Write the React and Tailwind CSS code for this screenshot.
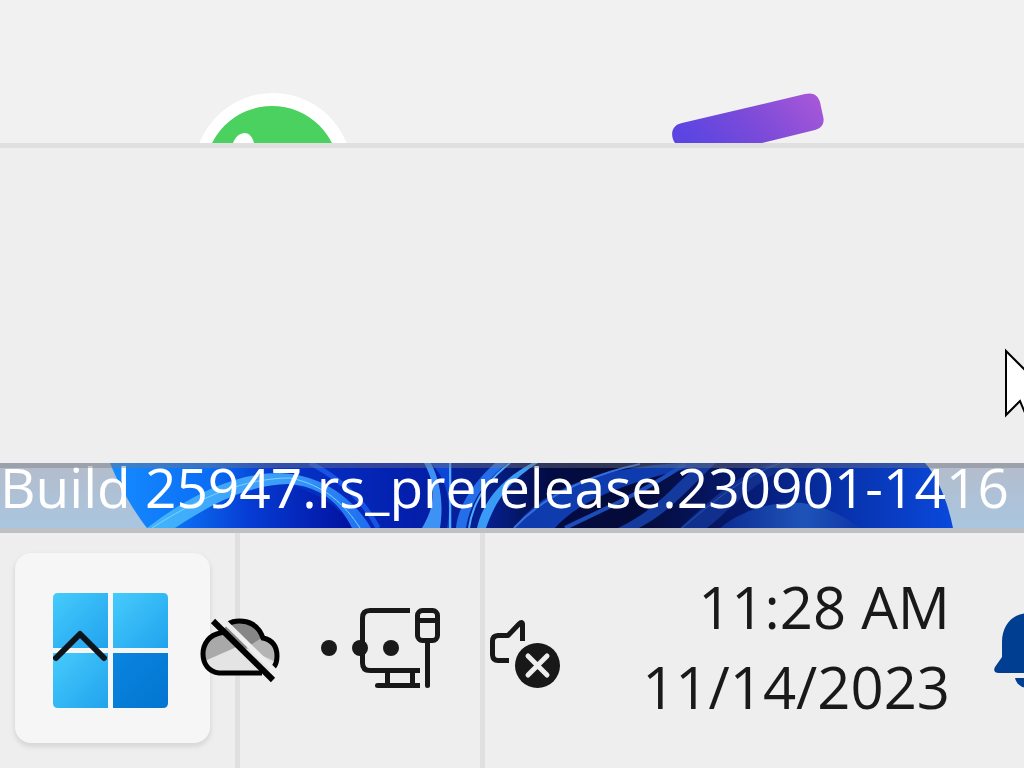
import React from "react";

function WhatsAppIcon() {
  return (
    <svg className="w-40 h-[50px] shrink-0" viewBox="0 0 160 50">
      <circle cx="80" cy="79" r="79" fill="#ffffff" />
      <circle cx="79" cy="80" r="67" fill="#4bd15f" />
      <path d="M40 50C43 43 46 41 51 40C56 40 59 43 61 50Z" fill="#ffffff" />
    </svg>
  );
}

function ClipchampIcon() {
  return (
    <svg className="w-[152px] h-[50px] shrink-0" viewBox="0 0 152 50">
      <defs>
        <linearGradient id="clip" x1="0" y1="0.6" x2="1" y2="0.3">
          <stop offset="0" stopColor="#5b45e2" />
          <stop offset="0.5" stopColor="#7c4bd8" />
          <stop offset="1" stopColor="#a557d8" />
        </linearGradient>
      </defs>
      <path
        d="M3 50C-2 43-1 32 10 30L133 1C141-1 146 2 148 9L151 23C153 30 150 35 143 37L90 50Z"
        fill="url(#clip)"
      />
    </svg>
  );
}

function Cursor() {
  return (
    <svg className="absolute right-0 top-[200px] w-5 h-[72px]" viewBox="0 0 20 72">
      <path
        d="M2 3V67L16 53L24 72L36 66L28 50H49Z"
        fill="#ffffff"
        stroke="#000000"
        strokeWidth="2"
      />
    </svg>
  );
}

function Wallpaper() {
  return (
    <svg
      className="absolute inset-0 w-full h-full"
      viewBox="0 0 1024 65"
      preserveAspectRatio="none"
    >
      <defs>
        <linearGradient id="sky" x1="0" y1="0" x2="0" y2="1">
          <stop offset="0" stopColor="#b4bccb" />
          <stop offset="1" stopColor="#a9c6e0" />
        </linearGradient>
        <linearGradient id="bloom" x1="110" x2="953" y1="0" y2="0" gradientUnits="userSpaceOnUse">
          <stop offset="0" stopColor="#168cff" />
          <stop offset="0.12" stopColor="#0a6df5" />
          <stop offset="0.2" stopColor="#0634c8" />
          <stop offset="0.35" stopColor="#031fae" />
          <stop offset="0.45" stopColor="#06208c" />
          <stop offset="0.52" stopColor="#030b45" />
          <stop offset="0.62" stopColor="#040b38" />
          <stop offset="0.75" stopColor="#06196e" />
          <stop offset="0.86" stopColor="#0730a8" />
          <stop offset="1" stopColor="#0a49dc" />
        </linearGradient>
        <linearGradient id="petal" x1="0" y1="0" x2="1" y2="0">
          <stop offset="0" stopColor="#41b4fb" />
          <stop offset="0.6" stopColor="#3d9dfa" />
          <stop offset="1" stopColor="#1d6cf0" />
        </linearGradient>
        <linearGradient id="inner" x1="0" y1="0" x2="1" y2="0">
          <stop offset="0" stopColor="#0d7af8" />
          <stop offset="0.45" stopColor="#063cd4" />
          <stop offset="1" stopColor="#0212a0" />
        </linearGradient>
        <linearGradient id="hump" x1="0" y1="0" x2="1" y2="0">
          <stop offset="0" stopColor="#0c2c92" />
          <stop offset="0.6" stopColor="#1f53b8" />
          <stop offset="1" stopColor="#0c37a8" />
        </linearGradient>
        <clipPath id="flower">
          <path d="M110 0H925C938 14 948 40 953 65H147C135 50 120 25 110 0Z" />
        </clipPath>
      </defs>
      <rect width="1024" height="65" fill="url(#sky)" />
      <g clipPath="url(#flower)">
        <rect x="100" width="860" height="65" fill="url(#bloom)" />
        <path d="M165 65C205 36 245 20 290 22C320 30 345 48 352 65Z" fill="url(#inner)" />
        <path
          d="M147 65C190 32 235 10 280 10C325 12 355 38 371 65H352C340 40 320 23 288 21C245 22 205 45 175 65Z"
          fill="url(#petal)"
        />
        <path d="M152 65C200 34 245 15 290 15C325 22 345 42 360 65" fill="none" stroke="#79d4ff" />
        <path d="M310 0C345 18 365 40 378 65" fill="none" stroke="#1853e4" strokeWidth="5" />
        <path d="M424 0C438 25 434 45 422 65H440C444 40 440 18 431 0Z" fill="#3e91f5" />
        <path d="M431 0C450 20 451 45 447 65H452V0Z" fill="#0b46d8" />
        <path d="M450 0V65" stroke="#58a8fb" strokeWidth="2" />
        <path d="M495 0C475 18 458 42 456 65H466C470 40 484 18 508 0Z" fill="#256eea" />
        <path d="M532 0C498 18 482 42 477 65H486C494 42 506 20 538 0Z" fill="#3a9bf6" />
        <path d="M510 0C484 20 472 44 469 65" fill="none" stroke="#4ba9fa" strokeWidth="2" />
        <path d="M514 65C540 28 595 5 680 0H715C635 15 580 36 555 65Z" fill="#0e3cae" />
        <path d="M514 65C545 32 590 12 640 1" fill="none" stroke="#3570dc" strokeWidth="2" />
        <path d="M565 65C600 48 640 31 685 1" fill="none" stroke="#1c4cba" strokeWidth="4" />
        <path d="M618 65C655 48 675 21 700 0H716C690 24 670 49 639 65Z" fill="#143a9e" />
        <path d="M680 65C710 38 735 12 773 0H798C755 16 735 43 707 65Z" fill="#112f8d" />
        <path d="M682 65C712 40 740 15 780 0" fill="none" stroke="#2856b8" />
        <path d="M720 65C745 45 775 38 802 40C828 44 845 54 860 65Z" fill="url(#hump)" />
      </g>
    </svg>
  );
}

function WindowsLogo() {
  return (
    <svg className="w-[115px] h-[115px]" viewBox="0 0 115 115">
      <defs>
        <linearGradient id="win" x1="0" y1="0" x2="1" y2="1">
          <stop offset="0" stopColor="#0b85df" />
          <stop offset="1" stopColor="#0275d1" />
        </linearGradient>
        <linearGradient id="pane" x1="0" y1="0" x2="1" y2="1">
          <stop offset="0" stopColor="#46cbfc" />
          <stop offset="1" stopColor="#21a3ed" />
        </linearGradient>
      </defs>
      <path d="M5 0H55V55H0V5Q0 0 5 0Z" fill="url(#pane)" />
      <path d="M60 0H110Q115 0 115 5V55H60Z" fill="url(#pane)" />
      <path d="M0 60H55V115H5Q0 115 0 110Z" fill="url(#pane)" />
      <path d="M60 60H115V110Q115 115 110 115H60Z" fill="url(#win)" />
    </svg>
  );
}

function ChevronIcon() {
  return (
    <svg className="w-[54px] h-8" viewBox="0 0 54 32">
      <path
        d="M3 28L27 4L51 28"
        fill="none"
        stroke="#0d141c"
        strokeWidth="6"
        strokeLinecap="round"
        strokeLinejoin="round"
      />
    </svg>
  );
}

function CloudOffIcon() {
  return (
    <svg className="w-20 h-[66px]" viewBox="0 0 80 66">
      <defs>
        <clipPath id="cloud">
          <path d="M19 55C9 54 3 46 3 36C3 25 10 17 20 16C24 8 32 4 40 4C51 4 60 11 63 21C72 22 77 28 77 38C77 47 71 55 62 55Z" />
        </clipPath>
      </defs>
      <g clipPath="url(#cloud)">
        <rect width="80" height="66" fill="#e4e4e4" />
        <path d="M0 45L48 24L80 44V0H0Z" fill="#a9a9a9" />
        <path d="M24 0H70V20L46 31L24 14Z" fill="#868686" />
        <path d="M60 21L80 22V46L46 30Z" fill="#b4b4b4" />
      </g>
      <path
        d="M62 55H19C9 54 3 46 3 36C3 25 10 17 20 15L24 14M28 6C34 2 45 2 52 6C59 10 61 15 63 20C72 22 77 28 77 38C77 43 76 47 73 50"
        fill="none"
        stroke="#000000"
        strokeWidth="5"
      />
      <path d="M24 3L76 54" stroke="#eeeeee" strokeWidth="5" />
      <path d="M13 3L73 62" stroke="#000000" strokeWidth="6" />
    </svg>
  );
}

function NetworkIcon() {
  return (
    <svg
      className="w-20 h-20"
      viewBox="0 0 80 80"
      fill="none"
      stroke="#181818"
      strokeWidth="5"
    >
      <path d="M50 2.5H10Q2.5 2.5 2.5 10V55Q2.5 62.5 10 62.5H60" />
      <path d="M27.5 62V77M52.5 62V77" />
      <path d="M60 77.5H18" />
      <circle cx="17.5" cy="77.5" r="2.5" fill="#181818" stroke="none" />
      <rect x="57.5" y="2.5" width="20" height="30" rx="5" />
      <path d="M57.5 12.5H77.5" />
      <path d="M67.5 34V77.5" strokeLinecap="round" />
    </svg>
  );
}

function DotsIcon() {
  return (
    <svg className="w-20 h-4" viewBox="0 0 80 16" fill="#1a1a1a">
      <circle cx="9" cy="8" r="8" />
      <circle cx="40" cy="8" r="8" />
      <circle cx="71" cy="8" r="8" />
    </svg>
  );
}

function SpeakerMutedIcon() {
  return (
    <svg className="w-[70px] h-[70px]" viewBox="0 0 70 70" fill="none">
      <path
        d="M32.5 22V5Q32 2 29 5L18 16.5H8Q2.5 17 2.5 22V36Q3 41.5 8 41.5H19"
        stroke="#181818"
        strokeWidth="5"
        strokeLinejoin="round"
      />
      <circle cx="47.5" cy="46.5" r="22.5" fill="#181818" />
      <path d="M38 37L57 56M57 37L38 56" stroke="#eeeeee" strokeWidth="5" strokeLinecap="round" />
    </svg>
  );
}

function BellIcon() {
  return (
    <svg className="w-[70px] h-20" viewBox="0 0 70 80" fill="#003e92">
      <path d="M35 0C18 0 8 13 8 29V44L1 54C-1 58 1 60 5 60H65C69 60 71 58 69 54L62 44V29C62 13 52 0 35 0Z" />
      <path d="M21 65H49C47 72 42 75 35 75C28 75 23 72 21 65Z" />
    </svg>
  );
}

function Watermark() {
  return (
    <div className="relative h-[65px] shrink-0">
      <Wallpaper />
      <p className="relative -mt-4 text-[55px] leading-[80px] text-white whitespace-nowrap">
        Build 25947.rs_prerelease.230901-1416
      </p>
      <div className="absolute inset-x-0 top-0 h-[5px] bg-[#77777d]/40" />
    </div>
  );
}

function Taskbar() {
  return (
    <footer className="relative flex grow min-h-[240px] border-t-[5px] border-[#bfc0c4] bg-[#eeeeee]">
      <div className="relative w-60 shrink-0 border-r-[5px] border-[#e0e0e0] pl-[15px] pt-5">
        <button
          aria-label="Start"
          className="flex items-start w-[195px] h-[190px] pl-[38px] pt-10 rounded-2xl bg-[#f6f6f6] shadow-[0_3px_4px_1px_#d8d8d8]"
        >
          <WindowsLogo />
        </button>
        <button aria-label="Show hidden icons" className="absolute left-[53px] top-[97px]">
          <ChevronIcon />
        </button>
      </div>
      <div className="relative flex items-start w-[245px] shrink-0 border-r-[5px] border-[#e0e0e0] pt-[75px]">
        <button aria-label="OneDrive" className="absolute -left-10 top-[85px]">
          <CloudOffIcon />
        </button>
        <button aria-label="Network" className="ml-auto mr-10">
          <NetworkIcon />
        </button>
        <button aria-label="More" className="absolute left-20 top-[107px]">
          <DotsIcon />
        </button>
      </div>
      <div className="flex items-start grow">
        <button aria-label="Volume" className="ml-[5px] mt-[86px]">
          <SpeakerMutedIcon />
        </button>
        <button className="ml-auto mr-11 mt-[34px] text-right text-[58px] leading-[80px] text-[#191919] whitespace-nowrap">
          <time dateTime="2023-11-14T11:28">
            11:28 AM
            <br />
            11/14/2023
          </time>
        </button>
        <button aria-label="Notifications" className="shrink-0 -mr-10 mt-20">
          <BellIcon />
        </button>
      </div>
    </footer>
  );
}

export default function App() {
  return (
    <main className="flex flex-col min-h-screen overflow-hidden bg-[#eeeeee] font-['Open_Sans','Noto_Sans',sans-serif]">
      <div className="flex items-end h-[143px] shrink-0 gap-[319px] pl-[193px] bg-[#f1f1f1]">
        <WhatsAppIcon />
        <ClipchampIcon />
      </div>
      <section className="relative h-80 shrink-0 border-t-[5px] border-[#e0e0e0]">
        <Cursor />
      </section>
      <Watermark />
      <Taskbar />
    </main>
  );
}
